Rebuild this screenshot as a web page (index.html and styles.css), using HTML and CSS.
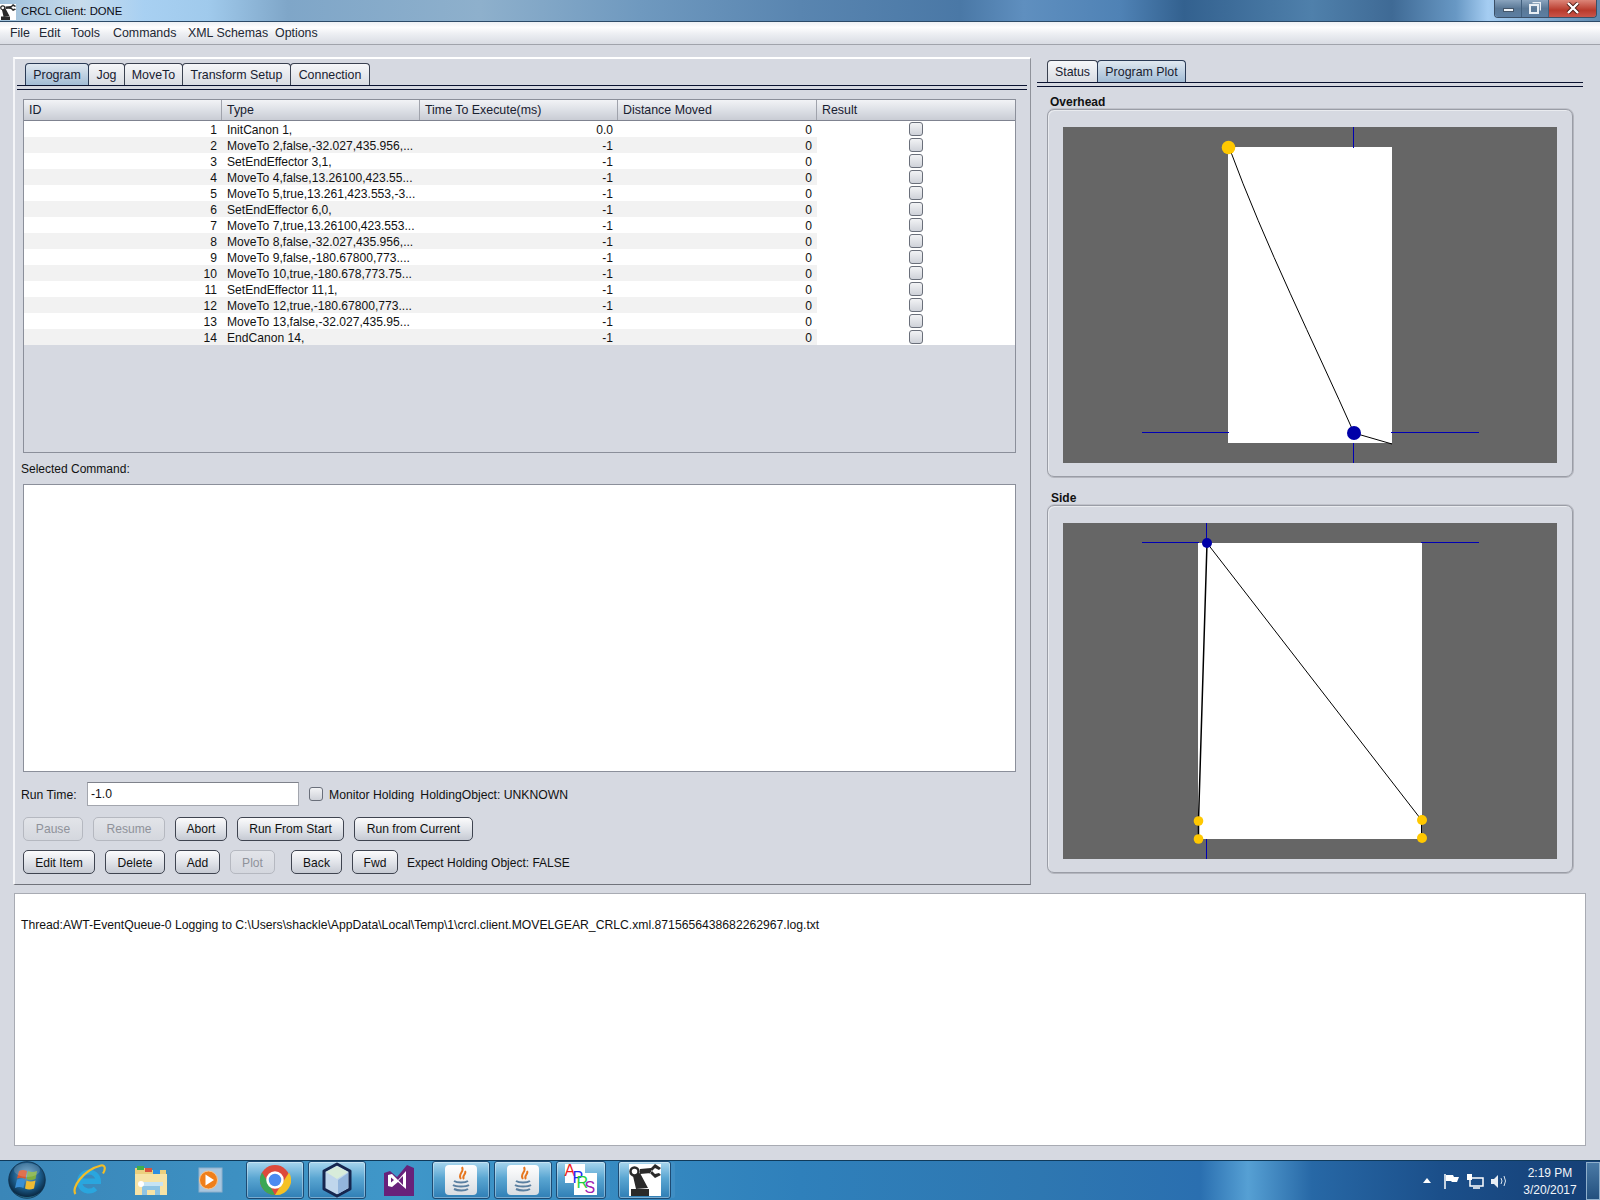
FILE: index.html
```html
<!DOCTYPE html>
<html lang="en">
<head>
<meta charset="utf-8">
<title>CRCL Client: DONE</title>
<link rel="stylesheet" href="styles.css">
</head>
<body>
<div class="titlebar">
  <svg class="title-icon" viewBox="0 0 32 32"><rect width="32" height="32" fill="#fff"/><path d="M2 25h18v7H2zM7 25 4 12l7-3 8 15z" fill="#2a2a2a"/><circle cx="5.500" cy="7.500" r="4" fill="#fff" stroke="#2a2a2a" stroke-width="2.500"/><path d="M11 5l11-1v5l-11 1zM21 5l5-5 6 4-2 2-4-2-3 3zM21 9l5 5 6-3-2-2-4 1-3-3z" fill="#2a2a2a"/></svg>
  <span class="title-text">CRCL Client: DONE</span>
  <div class="winbtns">
    <div class="winbtn min"><i></i></div>
    <div class="winbtn max"><svg viewBox="0 0 12 12" width="12" height="12"><path d="M3.500.500h8v8" fill="none" stroke="#e8eef4" stroke-width="1.500"/><rect x="1" y="3" width="8" height="8" fill="none" stroke="#e8eef4" stroke-width="2"/></svg></div>
    <div class="winbtn close"><svg viewBox="0 0 14 12" width="14" height="12"><path d="M2 1l10 10M12 1 2 11" stroke="#4a1a14" stroke-width="4"/><path d="M2 1l10 10M12 1 2 11" stroke="#fff" stroke-width="2.400"/></svg></div>
  </div>
</div>
<div class="menubar">
  <span class="m1">File</span><span class="m2">Edit</span><span class="m3">Tools</span><span class="m4">Commands</span><span class="m5">XML Schemas</span><span class="m6">Options</span>
</div>
<main class="workspace">
  <div class="top">
    <section class="left">
      <div class="tabs">
        <div class="tab sel w-program">Program</div><div class="tab w-jog">Jog</div><div class="tab w-move">MoveTo</div><div class="tab w-trans">Transform Setup</div><div class="tab w-conn">Connection</div>
      </div>
      <div class="tabbody">
        <div class="tablebox">
          <div class="row head"><div class="c">ID</div><div class="c">Type</div><div class="c">Time To Execute(ms)</div><div class="c">Distance Moved</div><div class="c">Result</div></div>
          <div class="row"><div class="c r">1</div><div class="c">InitCanon 1,</div><div class="c r">0.0</div><div class="c r">0</div><div class="c cb"><i></i></div></div>
          <div class="row"><div class="c r">2</div><div class="c">MoveTo 2,false,-32.027,435.956,...</div><div class="c r">-1</div><div class="c r">0</div><div class="c cb"><i></i></div></div>
          <div class="row"><div class="c r">3</div><div class="c">SetEndEffector 3,1,</div><div class="c r">-1</div><div class="c r">0</div><div class="c cb"><i></i></div></div>
          <div class="row"><div class="c r">4</div><div class="c">MoveTo 4,false,13.26100,423.55...</div><div class="c r">-1</div><div class="c r">0</div><div class="c cb"><i></i></div></div>
          <div class="row"><div class="c r">5</div><div class="c">MoveTo 5,true,13.261,423.553,-3...</div><div class="c r">-1</div><div class="c r">0</div><div class="c cb"><i></i></div></div>
          <div class="row"><div class="c r">6</div><div class="c">SetEndEffector 6,0,</div><div class="c r">-1</div><div class="c r">0</div><div class="c cb"><i></i></div></div>
          <div class="row"><div class="c r">7</div><div class="c">MoveTo 7,true,13.26100,423.553...</div><div class="c r">-1</div><div class="c r">0</div><div class="c cb"><i></i></div></div>
          <div class="row"><div class="c r">8</div><div class="c">MoveTo 8,false,-32.027,435.956,...</div><div class="c r">-1</div><div class="c r">0</div><div class="c cb"><i></i></div></div>
          <div class="row"><div class="c r">9</div><div class="c">MoveTo 9,false,-180.67800,773....</div><div class="c r">-1</div><div class="c r">0</div><div class="c cb"><i></i></div></div>
          <div class="row"><div class="c r">10</div><div class="c">MoveTo 10,true,-180.678,773.75...</div><div class="c r">-1</div><div class="c r">0</div><div class="c cb"><i></i></div></div>
          <div class="row"><div class="c r">11</div><div class="c">SetEndEffector 11,1,</div><div class="c r">-1</div><div class="c r">0</div><div class="c cb"><i></i></div></div>
          <div class="row"><div class="c r">12</div><div class="c">MoveTo 12,true,-180.67800,773....</div><div class="c r">-1</div><div class="c r">0</div><div class="c cb"><i></i></div></div>
          <div class="row"><div class="c r">13</div><div class="c">MoveTo 13,false,-32.027,435.95...</div><div class="c r">-1</div><div class="c r">0</div><div class="c cb"><i></i></div></div>
          <div class="row"><div class="c r">14</div><div class="c">EndCanon 14,</div><div class="c r">-1</div><div class="c r">0</div><div class="c cb"><i></i></div></div>
        </div>
        <div class="sel-label">Selected Command:</div>
        <div class="cmdbox"></div>
        <div class="runrow">
          <span class="lbl-run">Run Time:</span>
          <div class="field">-1.0</div>
          <i class="check"></i>
          <span class="lbl-mon">Monitor Holding</span>
          <span class="lbl-obj">HoldingObject: UNKNOWN</span>
        </div>
        <div class="btnrow first">
          <button class="btn dis w60">Pause</button><button class="btn dis w72">Resume</button><button class="btn w52">Abort</button><button class="btn w107">Run From Start</button><button class="btn w119">Run from Current</button>
        </div>
        <div class="btnrow second">
          <button class="btn w72">Edit Item</button><button class="btn w60">Delete</button><button class="btn w45">Add</button><button class="btn dis w45">Plot</button><button class="btn w51 gap16">Back</button><button class="btn w46">Fwd</button><span class="expect">Expect Holding Object: FALSE</span>
        </div>
      </div>
    </section>
    <section class="right">
      <div class="tabs rtabs">
        <div class="tab w-status">Status</div><div class="tab sel w-plot">Program Plot</div>
      </div>
      <div class="plots">
        <div class="plot-label">Overhead</div>
        <div class="groupbox">
          <svg class="canvas" width="494" height="336" viewBox="1063 127 494 336">
            <rect x="1063" y="127" width="494" height="336" fill="#666"/>
            <rect x="1228" y="147" width="164" height="296" fill="#fff"/>
            <path d="M1353.500 127V148M1353.500 443V463M1142 432.500H1229M1391 432.500H1479" stroke="#0000b4" stroke-width="1" fill="none"/>
            <path d="M1229 147C1265 245 1315 345 1354 433L1392 444" stroke="#000" stroke-width="1" fill="none"/>
            <circle cx="1228.500" cy="147.500" r="6.800" fill="#ffc800"/>
            <circle cx="1354" cy="433" r="7" fill="#0000a8"/>
          </svg>
        </div>
        <div class="plot-label side">Side</div>
        <div class="groupbox">
          <svg class="canvas" width="494" height="336" viewBox="1063 523 494 336">
            <rect x="1063" y="523" width="494" height="336" fill="#666"/>
            <rect x="1198" y="543" width="224" height="296" fill="#fff"/>
            <path d="M1206.500 523V543M1206.500 839V859M1142 542.500H1199M1421 542.500H1479" stroke="#0000b4" stroke-width="1" fill="none"/>
            <path d="M1207 543L1198.500 821V839" stroke="#000" stroke-width="1.500" fill="none"/>
            <path d="M1207 543L1421.500 820V838" stroke="#000" stroke-width="1" fill="none"/>
            <circle cx="1198.500" cy="821" r="4.800" fill="#ffc800"/>
            <circle cx="1198.500" cy="839" r="4.800" fill="#ffc800"/>
            <circle cx="1422" cy="820" r="5" fill="#ffc800"/>
            <circle cx="1422" cy="838" r="5" fill="#ffc800"/>
            <circle cx="1207" cy="543" r="5" fill="#0000a8"/>
          </svg>
        </div>
      </div>
    </section>
  </div>
  <div class="log"><p>Thread:AWT-EventQueue-0 Logging to C:\Users\shackle\AppData\Local\Temp\1\crcl.client.MOVELGEAR_CRLC.xml.8715656438682262967.log.txt</p></div>
</main>
<footer class="taskbar">
  <div class="tb-icons">
    <div class="tb orb"><svg viewBox="0 0 38 38" width="38" height="38"><defs><radialGradient id="og" cx="50%" cy="38%" r="62%"><stop offset="0" stop-color="#6ea6cc"/><stop offset=".6" stop-color="#1b5a88"/><stop offset=".92" stop-color="#0b2b46"/><stop offset="1" stop-color="#3fa7c9"/></radialGradient></defs><circle cx="19" cy="19" r="18.300" fill="url(#og)" stroke="#0f2f4a" stroke-width=".8"/><path d="M11 10q4-2 8 0l-1.500 8q-4-2-8.500-.5z" fill="#d9582f"/><path d="M20 10q4 2 9 0l-1.500 8q-5 2-9 0z" fill="#7fae40"/><path d="M9 18.500q4-1.500 8 .5l-1.500 8q-4-2-8.500 0z" fill="#3a8fd6"/><path d="M18.500 19.500q4 2 9 0l-1.500 8q-5 2-9 0z" fill="#efbb34"/><ellipse cx="19" cy="9" rx="13" ry="7" fill="#fff" opacity=".16"/></svg></div>
    <div class="tb"><svg viewBox="0 0 34 34" width="34" height="34"><path d="M9 18.500H26.500A9.500 9.500 0 1 0 23.500 25.500" fill="none" stroke="#2aa6de" stroke-width="5"/><path d="M9 17H26" stroke="#2aa6de" stroke-width="3"/><path d="M3.500 31C-1 25 11 7 29 2.500c4-1 5 3 2 8" fill="none" stroke="#f2bd28" stroke-width="2.200"/></svg></div>
    <div class="tb"><svg viewBox="0 0 34 34" width="34" height="34"><path d="M1 5h12l2 2h17v25H1z" fill="#ecd07e"/><rect x="3" y="3" width="7" height="4" fill="#3fb04c"/><rect x="11" y="5" width="7" height="4" fill="#d9543c"/><rect x="19" y="7" width="7" height="4" fill="#2f90e0"/><rect x="1" y="11" width="32" height="21" fill="#f6e3a6"/><rect x="5" y="19" width="24" height="4" fill="#c6e3f3"/><path d="M8 32V23H26V32H21V27H13V32z" fill="#8ec4e4"/><circle cx="7" cy="21" r="3" fill="#fff"/></svg></div>
    <div class="tb wmp"><svg viewBox="0 0 26 26" width="26" height="26"><rect x="1" y="1" width="23" height="24" fill="#a8c6df" stroke="#8fb0cb"/><circle cx="10.500" cy="13" r="9" fill="#ef7f1a" stroke="#f7c48e"/><path d="M7.500 7.500l8.500 5.500-8.500 5.500z" fill="#fff"/></svg></div>
    <div class="tb lit"><svg viewBox="0 0 32 32" width="32" height="32"><circle cx="16" cy="16" r="15" fill="#dd4a3c"/><path d="M3 23.500A15 15 0 0 1 3 8.500L10 20l6 11A15 15 0 0 1 3 23.500z" fill="#3ba755"/><path d="M16 31l7-11.500 7-11A15 15 0 0 1 16 31z" fill="#f5c125"/><circle cx="16" cy="16" r="7.500" fill="#4b8bf0" stroke="#fff" stroke-width="2.500"/></svg></div>
    <div class="tb lit"><svg viewBox="0 0 32 36" width="32" height="36"><path d="M16 2l13 7v18l-13 7L3 27V9z" fill="#c0d6ec" stroke="#16264f" stroke-width="3" stroke-linejoin="round"/><path d="M16 4l11 6-11 7L5 10z" fill="#d8ecda"/><path d="M17 18l10-7v15l-10 6z" fill="#93b5dc"/></svg></div>
    <div class="tb"><svg viewBox="0 0 30 32" width="30" height="32"><path d="M0 9l6-2 7 6L23 1l7 3v28H0z" fill="#68217a"/><path d="M4 11l4-1 6 6 8-9v18l-8-7-6 5-4-1z" fill="#fff"/><path d="M7 13.500v5l3-2.500zM19 12v9l-4.500-4.500z" fill="#68217a"/></svg></div>
    <div class="tb lit"><span class="javaico"><svg viewBox="0 0 24 30" width="24" height="30"><path d="M13 2c3 5-5 7-1 12M16 6c2 3-4 5-1 8" fill="none" stroke="#e6761f" stroke-width="2"/><path d="M5 16c3 2 11 2 14 0M4 20c3 2 13 2 16 0M5 24c4 2 11 2 14 0" fill="none" stroke="#5a7fa0" stroke-width="2"/></svg></span></div>
    <div class="tb lit"><span class="javaico"><svg viewBox="0 0 24 30" width="24" height="30"><path d="M13 2c3 5-5 7-1 12M16 6c2 3-4 5-1 8" fill="none" stroke="#e6761f" stroke-width="2"/><path d="M5 16c3 2 11 2 14 0M4 20c3 2 13 2 16 0M5 24c4 2 11 2 14 0" fill="none" stroke="#5a7fa0" stroke-width="2"/></svg></span></div>
    <div class="tb lit aprs"><svg class="aprs-art" viewBox="0 0 48 36" width="48" height="36"><rect x="8" y="2" width="20" height="19" fill="#fff"/><rect x="17" y="11" width="23" height="22" fill="#fff"/><text x="7.500" y="14" class="ap" fill="#ee1c1c">A</text><text x="15.500" y="21" class="ap" fill="#1c2cf0">P</text><text x="19.500" y="26" class="ap" fill="#22d040">R</text><text x="27.500" y="31" class="ap" fill="#a020b0">S</text></svg></div>
    <div class="tb lit robot"><svg viewBox="0 0 32 32" width="32" height="32"><rect width="32" height="32" fill="#fff"/><path d="M2 25h18v7H2zM7 25 4 12l7-3 8 15z" fill="#2a2a2a"/><circle cx="5.500" cy="7.500" r="4" fill="#fff" stroke="#2a2a2a" stroke-width="2.500"/><path d="M11 5l11-1v5l-11 1zM21 5l5-5 6 4-2 2-4-2-3 3zM21 9l5 5 6-3-2-2-4 1-3-3z" fill="#2a2a2a"/></svg></div>
  </div>
  <div class="tray">
    <span class="tri"></span>
    <svg viewBox="0 0 18 18" width="18" height="18"><path d="M3 2v15" stroke="#fff" stroke-width="1.500"/><path d="M4 3h7l1 2h5l-2 5h-5l-1-1H4z" fill="#fff"/></svg>
    <svg viewBox="0 0 18 18" width="18" height="18"><rect x="4" y="6" width="13" height="8" fill="none" stroke="#fff" stroke-width="1.500"/><path d="M7 16h7" stroke="#fff" stroke-width="1.500"/><rect x="1" y="2" width="5" height="6" fill="#fff"/></svg>
    <svg viewBox="0 0 18 18" width="18" height="18"><path d="M1 7h3l4-4v13l-4-4H1z" fill="#e8eef4"/><path d="M11 6q2 3 0 6M14 4q3 5 0 10" fill="none" stroke="#dbe6f0" stroke-width="1"/></svg>
    <div class="clock"><div>2:19 PM</div><div>3/20/2017</div></div>
    <div class="showdesk"></div>
  </div>
</footer>
</body>
</html>
```
FILE: styles.css
```css
* { box-sizing: border-box; }
html, body { margin: 0; height: 1200px; overflow: hidden; }
body {
  width: 1600px;
  display: flex;
  flex-direction: column;
  background: #d6d9e1;
  color: #111;
  font: 12px "Liberation Sans", Arial, sans-serif;
}
.titlebar {
  height: 22px;
  display: flex;
  align-items: center;
  border-bottom: 1px solid #2c4a68;
  background: linear-gradient(90deg, #9fc0da 0, #c8dcec 5%, #a8d0f2 9%, #a0caec 13%, #7fa6c8 18%, #8eb0cc 30%, #6f99bf 40%, #5985b0 50%, #4a78a6 60%, #5f8fbf 64%, #4f82b5 70%, #33618f 74%, #4f80ab 82%, #3f6a95 87%, #6898c4 91%, #a5cdf2 93%, #5f8ab0 100%);
}
.title-icon { width: 16px; height: 16px; flex: none; margin-top: 3px; }
.title-text { margin-left: 5px; font-size: 11.300px; color: #0c0c14; }
.winbtns { margin-left: auto; display: flex; height: 18px; margin-top: -4px; margin-right: 3px; border: 1px solid #3b4f66; border-top: 0; border-radius: 0 0 4px 4px; overflow: hidden; }
.winbtn { height: 17px; display: flex; align-items: center; justify-content: center; }
.min, .max { width: 27px; background: linear-gradient(#8aa4be, #5a7896 50%, #5c7ea2); border-right: 1px solid #42607e; }
.min i { width: 11px; height: 4px; background: #f0f4f8; border: 1px solid #44566a; margin-top: 4px; }
.close { width: 47px; background: linear-gradient(#dc8578, #b93a2c 60%, #c9554a); }
.menubar {
  height: 23px;
  border-bottom: 1px solid #a0a3ab;
  background: linear-gradient(#eef0f4 0, #fdfdfe 25%, #eceef2 55%, #d9dce3 100%);
  font-size: 12.400px;
  color: #222733;
  line-height: 22px;
  padding-left: 10px;
  display: flex;
}
.m1 { width: 29px; } .m2 { width: 32px; } .m3 { width: 42px; } .m4 { width: 75px; } .m5 { width: 87px; }
.workspace { flex: 1; display: flex; flex-direction: column; padding: 12px 14px 14px 13px; min-height: 0; }
.top { display: flex; height: 828px; }
.left {
  width: 1018px;
  height: 828px;
  padding: 1px 3px 0 2px;
  border-top: 2px solid #fff;
  border-left: 2px solid #f4f5f8;
  border-right: 1px solid #8f929a;
  border-bottom: 1px solid #70737b;
}
.tabs { display: flex; height: 26px; padding-left: 8px; border-bottom: 1px solid #0a1230; position: relative; }
.tabs::after { content: ""; position: absolute; left: 0; right: 0; bottom: -5px; height: 1px; background: #0a1230; }
.tab {
  height: 22px;
  margin-top: 3px;
  border: 1px solid #3a4150;
  border-bottom: 0;
  border-radius: 4px 4px 0 0;
  background: linear-gradient(#f6f7f9, #d9dce3);
  text-align: center;
  line-height: 22px;
  font-size: 12.400px;
  color: #182030;
  margin-right: -1px;
}
.tab.sel { background: linear-gradient(#e0e8f0, #a2bcd5); border-color: #2a3a55; position: relative; z-index: 1; }
.w-program { width: 64px; } .w-jog { width: 37px; } .w-move { width: 59px; } .w-trans { width: 109px; } .w-conn { width: 80px; }
.tabbody { padding: 13px 0 0 6px; }
.tablebox { width: 993px; height: 354px; border: 1px solid #8b8f9a; }
.row { display: grid; grid-template-columns: 198px 198px 198px 199px 198px; height: 16px; line-height: 18px; font-size: 12.100px; }
.row .c { height: 16px; padding: 0 5px; white-space: nowrap; overflow: hidden; background: #fff; }
.row:nth-child(odd) .c { background: #f2f2f2; }
.row:nth-child(odd) .c:last-child { background: #fff; }
.row .r { text-align: right; }
.row.head { height: 21px; line-height: 20px; border-bottom: 1px solid #7f8390; }
.tablebox .row.head .c { height: 20px; background: linear-gradient(#f2f3f6, #dde0e6 50%, #c9ccd4); border-right: 1px solid #a0a3ac; color: #182030; font-size: 12.400px; }
.tablebox .row.head .c:last-child { border-right: 0; }
.row .cb { display: flex; justify-content: center; align-items: center; padding: 0; }
.cb i, .check {
  display: block;
  width: 14px;
  height: 14px;
  border: 1px solid #6a6f7a;
  border-radius: 3px;
  background: linear-gradient(#f2f3f5, #cfd2d9);
}
.sel-label { height: 31px; margin-left: -2px; padding-top: 9px; }
.cmdbox { width: 993px; height: 288px; background: #fff; border: 1px solid #8b8f9a; }
.runrow { display: flex; align-items: center; height: 24px; margin: 10px 0 0 -2px; font-size: 12.200px; }
.lbl-run { width: 66px; padding-top: 2px; }
.field { width: 212px; height: 24px; background: #fff; border: 1px solid #a3a6ae; border-top-color: #7f828b; line-height: 23px; padding-left: 3px; }
.check { margin-left: 10px; }
.lbl-mon { margin: 0 6px 0 6px; padding-top: 2px; }
.lbl-obj { padding-top: 2px; }
.btnrow { display: flex; gap: 10px; height: 24px; }
.btnrow.first { margin-top: 11px; }
.btnrow.second { margin-top: 9px; align-items: center; }
.btn {
  height: 24px;
  padding: 0;
  font: 12.100px "Liberation Sans", Arial, sans-serif;
  color: #111;
  border: 1px solid #3f4450;
  border-radius: 5px;
  background: linear-gradient(#fbfbfc, #dfe2e8 55%, #c6cad3);
}
.btnrow.second .btn { padding-top: 1px; }
.btn.dis { color: #8f929a; border-color: #b5b8c0; background: linear-gradient(#e2e4e9, #d4d7de); }
.w60 { width: 60px; } .w72 { width: 72px; } .w52 { width: 52px; } .w107 { width: 107px; } .w119 { width: 119px; }
.w45 { width: 45px; } .w51 { width: 51px; } .w46 { width: 46px; }
.gap16 { margin-left: 6px; }
.expect { margin-left: -1px; padding-top: 2px; }
.right { flex: 1; padding: 0 3px 0 6px; min-width: 0; }
.rtabs { width: 546px; padding-left: 10px; }
.w-status { width: 51px; } .w-plot { width: 89px; }
.plots { padding: 12px 0 0 10px; }
.plot-label { height: 14px; padding-left: 3px; font-weight: bold; color: #111; line-height: 14px; }
.plot-label.side { height: 16px; margin-top: 12px; padding-left: 4px; line-height: 19px; }
.groupbox {
  width: 526px;
  height: 368px;
  padding: 17px 15px 14px 15px;
  border: 1px solid #9a9da6;
  border-radius: 7px;
  box-shadow: inset 1px 1px 0 #e9ebef, 0 1px 0 #b4b6be, 1px 0 0 #b4b6be, 0 -1px 0 #c0c2ca;
}
.canvas { display: block; }
.log {
  margin: 8px 0 0 1px;
  width: 1572px;
  height: 253px;
  background: #fff;
  border: 1px solid #a8abb3;
}
.log p { margin: 24px 0 0 6px; font-size: 12.200px; }
.taskbar {
  height: 40px;
  flex: none;
  display: flex;
  justify-content: space-between;
  border-top: 1px solid #103a5a;
  background: linear-gradient(90deg, #3a86b8 0, #3f97c9 25%, #2f80bb 50%, #2e77b1 65%, #2a6fb0 75%, #56a0d4 78%, #2768a6 82%, #1b4f8a 90%, #153f75 100%);
}
.tb-icons { display: flex; gap: 4px; }
.tb { width: 58px; height: 38px; display: flex; align-items: center; justify-content: center; }
.orb { width: 56px; padding-right: 2px; }
.wmp { padding-right: 4px; }
.lit {
  border: 1px solid #1d4a72;
  border-radius: 3px;
  background: linear-gradient(#a8d6ee, #5aa6d2 45%, #2f7eb5);
  box-shadow: inset 0 0 0 1px rgba(255,255,255,.35);
}
.javaico { width: 32px; height: 30px; border-radius: 4px; background: linear-gradient(#fff, #d8dde2); display: flex; align-items: center; justify-content: center; }
.aprs { width: 50px; justify-content: flex-start; box-shadow: inset 0 0 0 1px rgba(255,255,255,.35), 5px 0 0 -1px #3f8ec4; }
.aprs-art { flex: none; }
.ap { font: 16px "Liberation Sans", Arial, sans-serif; }
.robot { width: 53px; margin-left: 8px; box-shadow: inset 0 0 0 1px rgba(255,255,255,.35), 5px 0 0 -1px #3f8ec4; }
.tray { display: flex; align-items: center; gap: 6px; color: #fff; }
.tri { width: 0; height: 0; margin-right: 5px; border: 4px solid transparent; border-bottom: 5px solid #fff; border-top: 0; }
.clock { width: 68px; margin-left: 2px; padding-top: 2px; text-align: center; line-height: 17px; font-size: 12px; color: #f2f6fa; }
.showdesk { width: 14px; height: 38px; margin-left: -4px; border: 1px solid #8fb0cc; background: linear-gradient(#4a7aa6, #23507e); }
```
